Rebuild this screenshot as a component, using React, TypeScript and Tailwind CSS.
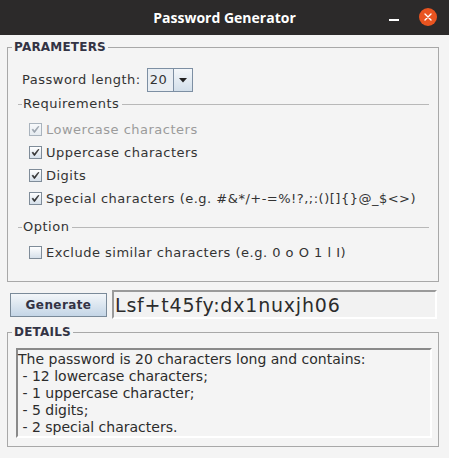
import { ReactNode } from 'react'

const body = { fontFamily: '"DejaVu Sans", "Liberation Sans", sans-serif' }

function Check({ checked, disabled }: { checked?: boolean; disabled?: boolean }) {
  return (
    <span
      className={
        'w-[13px] h-[13px] border flex items-center justify-center ' +
        (disabled
          ? 'border-[#a9b3bd] bg-gradient-to-b from-[#f7f9fb] to-[#e6ebf0]'
          : 'border-[#7f8c99] bg-gradient-to-b from-[#ffffff] to-[#d6e0ea]')
      }
    >
      {checked && (
        <svg width="9" height="9" viewBox="0 0 9 9">
          <path
            d="M1 4.5 L3 7.5 L3.8 7.5 L8 1.5 L7 1.5 L3.4 6 L2.2 4.2 Z"
            fill={disabled ? '#9aa3ad' : '#333333'}
            stroke={disabled ? '#9aa3ad' : '#333333'}
            strokeWidth="0.6"
          />
        </svg>
      )}
    </span>
  )
}

function CheckRow({ label, checked, disabled }: { label: string; checked?: boolean; disabled?: boolean }) {
  return (
    <div className="h-[23px] flex items-center pl-[11px] gap-[4px]">
      <Check checked={checked} disabled={disabled} />
      <span className={disabled ? 'text-[#9b9b9b]' : 'text-[#333333]'}>{label}</span>
    </div>
  )
}

function Separator({ title }: { title: string }) {
  return (
    <div className="h-[14px] flex items-center">
      <span className="w-[4px] h-px bg-[#b8b8b8]" />
      <span className="px-[1px] text-[#333333]">{title}</span>
      <span className="flex-1 h-px bg-[#b8b8b8] ml-[2px]" />
    </div>
  )
}

function Group({
  title,
  children,
  className,
  legendClass,
}: {
  title: string
  children: ReactNode
  className?: string
  legendClass?: string
}) {
  return (
    <fieldset className={'border border-[#a8a8a8] ml-[7px] mr-[10px] ' + (className ?? '')}>
      <legend
        className={
          'px-[2px] text-[12px] leading-[14px] font-bold tracking-[0.2px] text-[#333344] ' + (legendClass ?? '')
        }
      >
        {title}
      </legend>
      {children}
    </fieldset>
  )
}

export default function App() {
  return (
    <div
      className="w-[449px] h-[458px] bg-[#f4f4f4] flex flex-col text-[13px] leading-[16px] tracking-[0.5px]"
      style={body}
    >
      <div className="h-[35px] bg-[#2c2a2a] relative flex items-center justify-center shrink-0">
        <span
          className="text-white font-bold text-[14px] tracking-normal"
          style={{ fontFamily: '"Open Sans", "Noto Sans", sans-serif' }}
        >
          Password Generator
        </span>
        <span className="absolute left-[389px] top-[19px] w-[10px] h-[2px] bg-white" />
        <span className="absolute left-[419px] top-[8px] w-[18px] h-[18px] rounded-full bg-[#e95420] flex items-center justify-center">
          <svg width="8" height="8" viewBox="0 0 8 8">
            <path d="M1 1 L7 7 M7 1 L1 7" stroke="white" strokeWidth="1.4" strokeLinecap="round" />
          </svg>
        </span>
      </div>

      <Group title="PARAMETERS" className="mt-[5px] pl-[10px] pr-[9px] pb-[17px]" legendClass="-ml-[6px]">
        <div className="flex items-center pl-[4px] pt-[14px] gap-[6px]">
          <span className="text-[#333333]">Password length:</span>
          <div className="h-[24px] w-[46px] border border-[#7d8fa3] flex">
            <span className="flex-1 bg-[#e9eef3] flex items-center pl-[2px] text-[#333333]">20</span>
            <span className="w-[19px] border-l border-[#7d8fa3] bg-gradient-to-b from-[#f4f7fa] to-[#d3dfea] flex items-center justify-center">
              <svg width="8" height="5" viewBox="0 0 8 5">
                <path d="M0 0 H8 L4 4.5 Z" fill="#222" />
              </svg>
            </span>
          </div>
        </div>
        <div className="mt-[5px]">
          <Separator title="Requirements" />
        </div>
        <div className="mt-[7px] flex flex-col">
          <CheckRow label="Lowercase characters" checked disabled />
          <CheckRow label="Uppercase characters" checked />
          <CheckRow label="Digits" checked />
          <CheckRow label="Special characters (e.g. #&*/+-=%!?,;:()[]{}@_$<>)" checked />
        </div>
        <div className="mt-[10px]">
          <Separator title="Option" />
        </div>
        <div className="mt-[7px]">
          <CheckRow label="Exclude similar characters (e.g. 0 o O 1 l I)" />
        </div>
      </Group>

      <div className="mt-[8px] pl-[10px] pr-[12px] flex items-center gap-[5px]">
        <button className="w-[97px] h-[24px] border border-[#7a8a99] bg-gradient-to-b from-[#f3f6f9] to-[#c4d5e6] text-[12px] font-bold text-[#333344] tracking-[0.4px]">
          Generate
        </button>
        <div className="flex-1 h-[29px] border-2 border-t-[#9a9a9a] border-l-[#9a9a9a] border-r-white border-b-white bg-[#f2f2f2] flex items-center pl-[1px] text-[19px] tracking-[0.8px] text-[#2c2c2c]">
          Lsf+t45fy:dx1nuxjh06
        </div>
      </div>

      <Group title="DETAILS" className="mt-[6px] pl-[8px] pr-[6px] pt-[9px] pb-[8px]" legendClass="-ml-[4px]">
        <div className="h-[90px] border-2 border-t-[#8a8a8a] border-l-[#8a8a8a] border-r-white border-b-white bg-[#f4f4f4] pl-[0px] pt-[1px] text-[14px] leading-[17px] tracking-normal text-[#2c2c2c] whitespace-pre">
          <div>The password is 20 characters long and contains:</div>
          <div> - 12 lowercase characters;</div>
          <div> - 1 uppercase character;</div>
          <div> - 5 digits;</div>
          <div> - 2 special characters.</div>
        </div>
      </Group>
    </div>
  )
}
